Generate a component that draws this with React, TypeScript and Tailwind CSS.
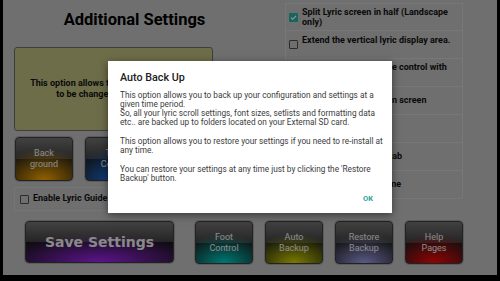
import React from 'react';

type Glow = { label: string[]; bg: string };

// left column small buttons
const topButtons: Glow[] = [
  {
    label: ['Back', 'ground'],
    bg: 'bg-[radial-gradient(ellipse_85%_75%_at_50%_100%,#f2a200_0%,rgba(242,162,0,0)_100%),linear-gradient(to_bottom,#6e6e6e_0%,#3c3c3c_50%,#181818_51%,#181818_100%)]',
  },
  {
    label: ['Text', 'Colour'],
    bg: 'bg-[radial-gradient(ellipse_85%_75%_at_50%_100%,#1f6fd8_0%,rgba(31,111,216,0)_100%),linear-gradient(to_bottom,#6e6e6e_0%,#3c3c3c_50%,#181818_51%,#181818_100%)]',
  },
  {
    label: ['Chord', 'Colour'],
    bg: 'bg-[radial-gradient(ellipse_85%_75%_at_50%_100%,#30b030_0%,rgba(48,176,48,0)_100%),linear-gradient(to_bottom,#6e6e6e_0%,#3c3c3c_50%,#181818_51%,#181818_100%)]',
  },
];

const bottomButtons: Glow[] = [
  {
    label: ['Foot', 'Control'],
    bg: 'bg-[radial-gradient(ellipse_85%_70%_at_50%_100%,#00c8c0_0%,rgba(0,200,192,0)_100%),linear-gradient(to_bottom,#6e6e6e_0%,#3c3c3c_50%,#181818_51%,#181818_100%)]',
  },
  {
    label: ['Auto', 'Backup'],
    bg: 'bg-[radial-gradient(ellipse_85%_70%_at_50%_100%,#cccc00_0%,rgba(204,204,0,0)_100%),linear-gradient(to_bottom,#6e6e6e_0%,#3c3c3c_50%,#181818_51%,#181818_100%)]',
  },
  {
    label: ['Restore', 'Backup'],
    bg: 'bg-[radial-gradient(ellipse_85%_70%_at_50%_100%,#9696dc_0%,rgba(150,150,220,0)_100%),linear-gradient(to_bottom,#6e6e6e_0%,#3c3c3c_50%,#181818_51%,#181818_100%)]',
  },
  {
    label: ['Help', 'Pages'],
    bg: 'bg-[radial-gradient(ellipse_85%_70%_at_50%_100%,#f00808_0%,rgba(240,8,8,0)_100%),linear-gradient(to_bottom,#6e6e6e_0%,#3c3c3c_50%,#181818_51%,#181818_100%)]',
  },
];

const options = [
  { text: ['Split Lyric screen in half (Landscape', 'only)'], checked: true },
  { text: ['Extend the vertical lyric display area.'], checked: false, raise: true },
  { text: ['Enable Foot Pedal page control with', 'Bluetooth'], checked: false },
  { text: ['Show clock & battery in screen'], checked: false },
  { text: ['Hide the status bar'], checked: false },
  { text: ['Start on the Set Lists tab'], checked: false },
  { text: ['Show the songs timeline'], checked: false },
];

function Check({ checked }: { checked: boolean }) {
  return checked ? (
    <div className="w-[9px] h-[9px] shrink-0 rounded-[1px] bg-[#2aa898] flex items-center justify-center">
      <svg width="7" height="7" viewBox="0 0 10 10">
        <path d="M1.5 5.2 L4 7.6 L8.6 2.6" stroke="#fff" strokeWidth="1.6" fill="none" />
      </svg>
    </div>
  ) : (
    <div className="w-[9px] h-[9px] shrink-0 rounded-[1px] border border-[#4a4a4a]" />
  );
}

function GlossButton({ b, w, h }: { b: Glow; w: string; h: string }) {
  return (
    <div className={`${w} ${h} ${b.bg} rounded-[4px] border border-[#3a3a3a] shadow-[0_0_0_1px_#9a9a9a] flex flex-col items-center justify-center`}>
      {b.label.map((l) => (
        <div key={l} className="text-[9px] leading-[11px] text-[#e6e6e6]">{l}</div>
      ))}
    </div>
  );
}

export default function App() {
  return (
    <div className="relative w-[500px] h-[281px] bg-black overflow-hidden font-['Roboto','Liberation_Sans',sans-serif]">
      {/* settings screen */}
      <div className="ml-[3px] w-[494px] h-[275px] bg-[#b9b9b9] pl-[11px] flex flex-col">
        <div className="flex">
          {/* left column */}
          <div className="w-[241px] flex flex-col">
            <div className="mt-[10px] h-[20px] text-center text-[16.5px] leading-[20px] font-bold text-black">
              Additional Settings
            </div>
            <div className="mt-[17px] w-[199px] h-[84px] rounded-[3px] border border-[#6a6a60] bg-[#b8b67a] flex flex-col items-center justify-center text-center text-[9px] leading-[11.5px] font-bold text-[#111]">
              <div>This option allows the background colour</div>
              <div>to be changed to your liking.</div>
            </div>
            <div className="mt-[6px] flex gap-[12px] pl-[1px]">
              {topButtons.map((b) => (
                <GlossButton key={b.label[0]} b={b} w="w-[58px]" h="h-[44px]" />
              ))}
            </div>
            <div className="mt-[6px] w-[199px] h-[24px] border border-[#c4c4c4] flex items-center gap-[4px] pl-[5px]">
              <Check checked={false} />
              <span className="text-[9px] font-bold text-[#111]">Enable Lyric Guide</span>
            </div>
          </div>

          {/* right column */}
          <div className="ml-[30px] mt-[3px] w-[178px] flex flex-col">
            {options.map((o, i) => (
              <div
                key={i}
                className={`h-[28px] border-x border-b border-[#c6c6c6] ${i === 0 ? 'border-t' : ''} flex items-center gap-[4px] pl-[3px] pr-[10px]`}
              >
                <Check checked={o.checked} />
                <div className={`text-[9px] leading-[10.5px] font-bold text-[#111] ${o.raise ? 'pb-[8px]' : ''}`}>
                  {o.text.map((t) => (
                    <div key={t} className="whitespace-nowrap">{t}</div>
                  ))}
                </div>
              </div>
            ))}
          </div>
        </div>

        {/* bottom buttons */}
        <div className="mt-[10px] pl-[11px] flex items-start">
          <div className="w-[149px] h-[42px] rounded-[4px] border border-[#3a3a3a] shadow-[0_0_0_1px_#9a9a9a] bg-[radial-gradient(ellipse_70%_70%_at_50%_100%,#9a22e8_0%,rgba(154,34,232,0)_100%),linear-gradient(to_bottom,#707070_0%,#3c3c3c_50%,#141414_51%,#141414_100%)] flex items-center justify-center">
            <span className="font-['DejaVu_Sans',sans-serif] font-bold text-[14px] text-[#e4e4e4]">Save Settings</span>
          </div>
          <div className="ml-[21px] flex gap-[12px]">
            {bottomButtons.map((b) => (
              <GlossButton key={b.label[0]} b={b} w="w-[58px]" h="h-[43px]" />
            ))}
          </div>
        </div>
      </div>

      {/* dim + dialog */}
      <div className="absolute inset-0 bg-black/40 flex items-center justify-center pb-[7px]">
        <div className="w-[284px] h-[152px] bg-white shadow-[0_2px_8px_rgba(0,0,0,0.5)] flex flex-col pt-[10px] pl-[12px]">
          <div className="text-[10.75px] leading-[13px] font-medium text-[#212121]">Auto Back Up</div>
          <div className="mt-[6.5px] pr-[8px] text-[8.25px] leading-[9.3px] text-[#3c3c3c] whitespace-pre-line">
            {'This option allows you to back up your configuration and settings at a given time period.\nSo, all your lyric scroll settings, font sizes, setlists and formatting data etc.. are backed up to folders located on your External SD card.\n\nThis option allows you to restore your settings if you need to re-install at any time.\n\nYou can restore your settings at any time just by clicking the \'Restore Backup\' button.'}
          </div>
          <div className="mt-auto flex justify-end pr-[19px] pb-[9px]">
            <span className="text-[7.5px] font-bold text-[#26a69a]">OK</span>
          </div>
        </div>
      </div>
    </div>
  );
}
